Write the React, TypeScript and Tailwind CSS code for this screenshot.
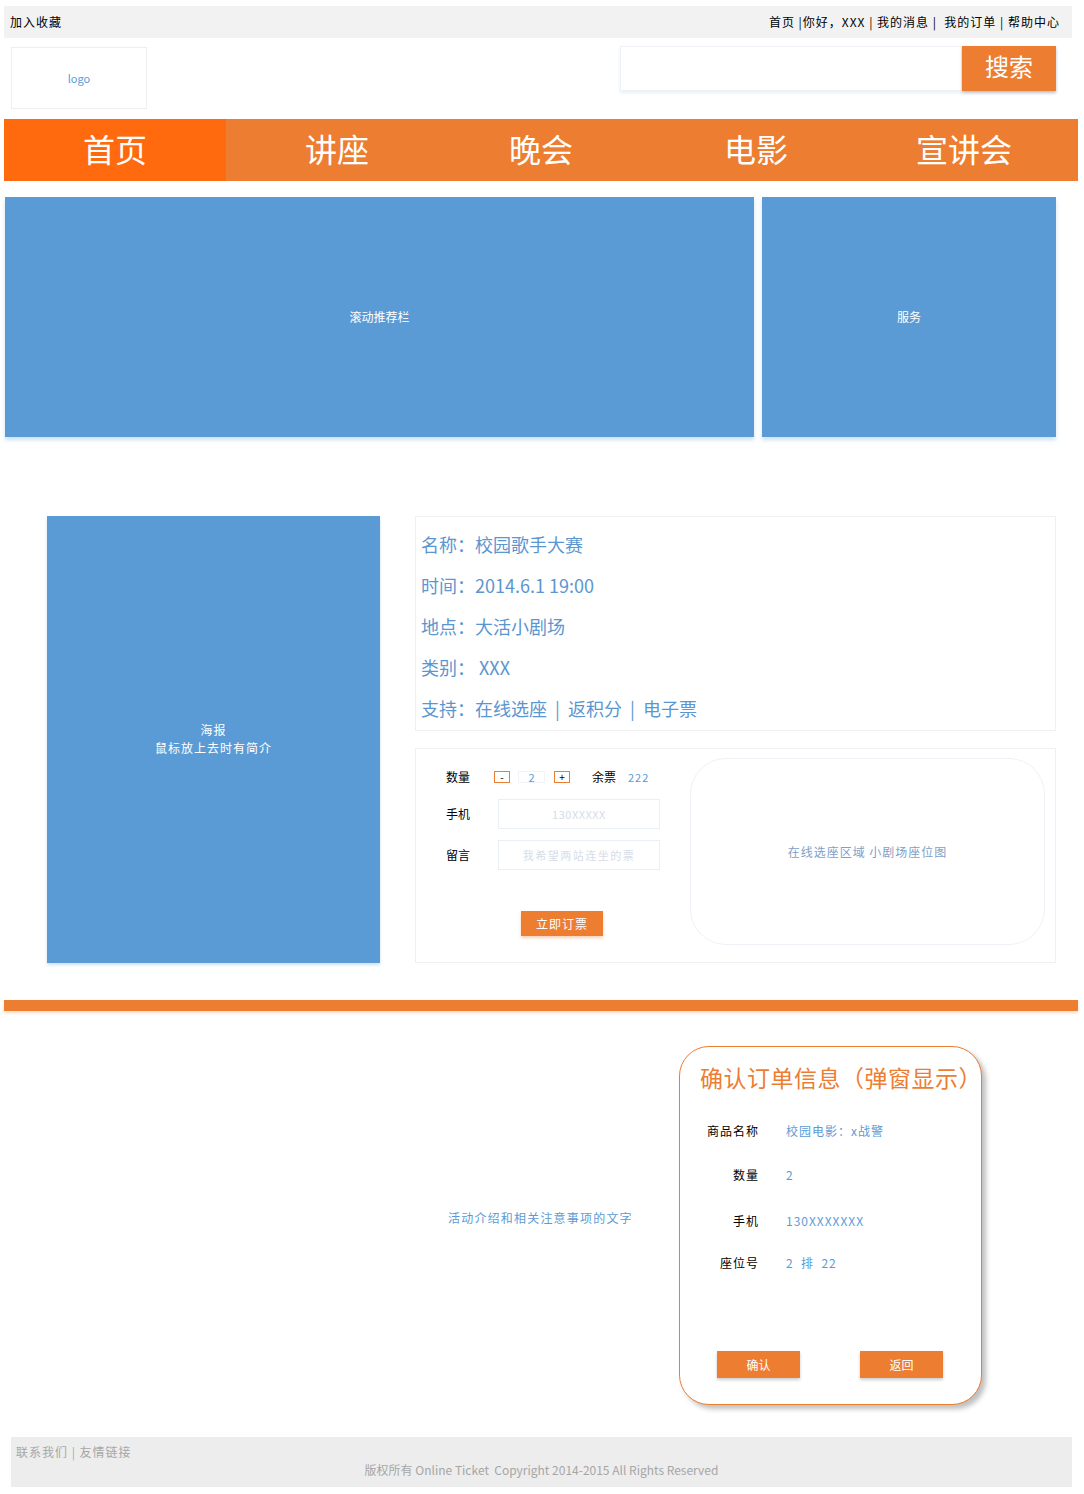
const font = 'font-["Noto_Sans_CJK_SC","Noto_Sans",sans-serif]';

const navItems = [
  { label: '首页', active: true },
  { label: '讲座' },
  { label: '晚会' },
  { label: '电影' },
  { label: '宣讲会' },
];

const infoLines = [
  '名称：校园歌手大赛',
  '时间：2014.6.1 19:00',
  '地点：大活小剧场',
  '类别： XXX',
  '支持：在线选座 | 返积分 | 电子票',
];

const orderRows = [
  { label: '商品名称', value: '校园电影：x战警', h: 'h-[44px]' },
  { label: '数量', value: '2', h: 'h-[46px]' },
  { label: '手机', value: '130XXXXXXX', h: 'h-[42px]' },
  { label: '座位号', value: '2  排  22', h: 'h-[42px]' },
];

function TopBar() {
  return (
    <div className="mx-[4px] mt-[6px] flex h-[32px] w-[1068px] items-center justify-between bg-[#f2f2f2] px-[6px] text-[12px] tracking-[1px] text-black">
      <span>加入收藏</span>
      <span className="whitespace-pre pr-[6px]">首页 |你好，XXX | 我的消息 |  我的订单 | 帮助中心</span>
    </div>
  );
}

function Header() {
  return (
    <div className="mt-[8px] flex h-[63px] items-start justify-between pl-[11px] pr-[28px]">
      <div className="mt-[1px] flex h-[62px] w-[136px] items-center justify-center border border-[#eeeeee] text-[11px] text-[#5b9bd5]">
        logo
      </div>
      <div className="flex h-[45px] w-[436px] shadow-[0_2px_3px_rgba(91,155,213,0.15)]">
        <input className="h-full flex-1 border border-[#eef1f6] outline-none" />
        <button className="h-full w-[94px] bg-[#ed7d31] pb-[5px] text-[24px] text-white shadow-[0_2px_3px_rgba(0,0,0,0.2)]">
          搜索
        </button>
      </div>
    </div>
  );
}

function Nav() {
  return (
    <div className="mx-[4px] mt-[10px] grid h-[62px] w-[1074px] grid-cols-[222px_222px_186px_244px_172px] bg-[#ed7d31] text-[32px] text-white">
      {navItems.map((item) => (
        <div
          key={item.label}
          className={`flex items-center justify-center pb-[4px] ${item.active ? 'bg-[#ff6a0e]' : ''}`}
        >
          {item.label}
        </div>
      ))}
    </div>
  );
}

function Banner() {
  return (
    <div className="mt-[16px] flex h-[240px] gap-[8px] pl-[5px] text-[12px] text-white">
      <div className="flex w-[749px] items-center justify-center bg-[#5b9bd5] shadow-[0_3px_4px_rgba(91,155,213,0.3)]">
        滚动推荐栏
      </div>
      <div className="flex w-[294px] items-center justify-center bg-[#5b9bd5] shadow-[0_3px_4px_rgba(91,155,213,0.3)]">
        服务
      </div>
    </div>
  );
}

function Details() {
  return (
    <div className="mt-[79px] flex gap-[35px] pl-[47px]">
      <div className="flex h-[447px] w-[333px] flex-col items-center justify-center bg-[#5b9bd5] pb-[2px] text-center text-[12px] leading-[18px] tracking-[1px] text-white shadow-[0_2px_3px_rgba(91,155,213,0.3)]">
        <span>海报</span>
        <span>鼠标放上去时有简介</span>
      </div>
      <div className="flex w-[641px] flex-col gap-[17px]">
        <div className="flex h-[215px] flex-col gap-[17px] border border-[#f0f0f0] pl-[5px] pt-[15px] text-[18px] leading-[24px] text-[#5b96d0]">
          {infoLines.map((line) => (
            <div key={line} className="whitespace-pre">{line.replace(/ \| /g, '  |  ')}</div>
          ))}
        </div>
        <div className="flex h-[215px] border border-[#f0f0f0] pl-[30px] pr-[10px] pt-[9px]">
          <div className="flex w-[244px] flex-col text-[12px] text-black">
            <div className="mt-[11px] flex h-[16px] items-center">
              <span className="w-[48px]">数量</span>
              <span className="flex h-[12px] w-[16px] items-center justify-center border border-[#ed7d31] text-[10px] leading-none">-</span>
              <span className="ml-[8px] flex h-[12px] w-[27px] items-center justify-center border border-[#f0f3f7] text-[11px] leading-none text-[#5b9bd5]">2</span>
              <span className="ml-[9px] flex h-[12px] w-[16px] items-center justify-center border border-[#ed7d31] text-[10px] leading-none">+</span>
              <span className="ml-[22px]">余票</span>
              <span className="ml-[12px] text-[11px] tracking-[1px] text-[#5b9bd5]">222</span>
            </div>
            <div className="mt-[14px] flex h-[30px] items-center">
              <span className="w-[52px]">手机</span>
              <div className="flex h-[30px] w-[162px] items-center justify-center border border-[#eaeef5] text-[11px] tracking-[0.5px] text-[#d6dde8]">
                130XXXXX
              </div>
            </div>
            <div className="mt-[11px] flex h-[30px] items-center">
              <span className="w-[52px]">留言</span>
              <div className="flex h-[30px] w-[162px] items-center justify-center border border-[#eaeef5] text-[11px] tracking-[1.5px] text-[#d6dde8]">
                我希望两站连坐的票
              </div>
            </div>
            <button className="ml-[75px] mt-[41px] h-[25px] w-[82px] bg-[#ed7d31] text-[12px] tracking-[1px] text-white shadow-[0_2px_3px_rgba(237,125,49,0.35)]">
              立即订票
            </button>
          </div>
          <div className="flex h-[187px] w-[355px] items-center justify-center rounded-[36px] border border-[#eef2f7] text-[12px] tracking-[1px] text-[#7fa0c8]">
            在线选座区域 小剧场座位图
          </div>
        </div>
      </div>
    </div>
  );
}

function OrderModal() {
  return (
    <div className="flex h-[359px] w-[303px] flex-col rounded-[30px] border border-[#ed7d31] bg-white shadow-[4px_4px_5px_rgba(0,0,0,0.25)]">
      <div className="pl-[20px] pt-[15px] text-[23px] leading-[30px] tracking-[0.5px] text-[#ed7d31]">
        确认订单信息（弹窗显示）
      </div>
      <div className="mt-[30px] flex flex-col text-[12px] tracking-[1px]">
        {orderRows.map((row) => (
          <div key={row.label} className={`flex ${row.h} items-start`}>
            <span className="w-[79px] text-right text-black">{row.label}</span>
            <span className="ml-[27px] whitespace-pre text-[#5b9bd5]">{row.value}</span>
          </div>
        ))}
      </div>
      <div className="mt-[55px] flex gap-[60px] pl-[37px]">
        <button className="h-[27px] w-[83px] bg-[#ed7d31] text-[12px] text-white shadow-[0_2px_3px_rgba(0,0,0,0.2)]">确认</button>
        <button className="h-[27px] w-[83px] bg-[#ed7d31] text-[12px] text-white shadow-[0_2px_3px_rgba(0,0,0,0.2)]">返回</button>
      </div>
    </div>
  );
}

export default function App() {
  return (
    <div className={`${font} w-[1084px] bg-white pb-[7px]`}>
      <TopBar />
      <Header />
      <Nav />
      <Banner />
      <Details />

      <div className="mx-[4px] mt-[37px] h-[11px] w-[1074px] bg-[#ed7d31] shadow-[0_2px_3px_rgba(237,125,49,0.3)]" />

      <div className="mt-[35px] flex items-center pl-[448px]">
        <span className="w-[231px] pb-[16px] text-[12px] tracking-[1.2px] text-[#5b9bd5]">活动介绍和相关注意事项的文字</span>
        <OrderModal />
      </div>

      <div className="ml-[11px] mt-[32px] flex h-[50px] w-[1061px] flex-col bg-[#ededed] px-[5px] pt-[6px] text-[12px] leading-[18px] text-[#a6a6a6]">
        <span className="whitespace-pre tracking-[1px]">联系我们 | 友情链接</span>
        <span className="whitespace-pre text-center">版权所有 Online Ticket  Copyright 2014-2015 All Rights Reserved</span>
      </div>
    </div>
  );
}
